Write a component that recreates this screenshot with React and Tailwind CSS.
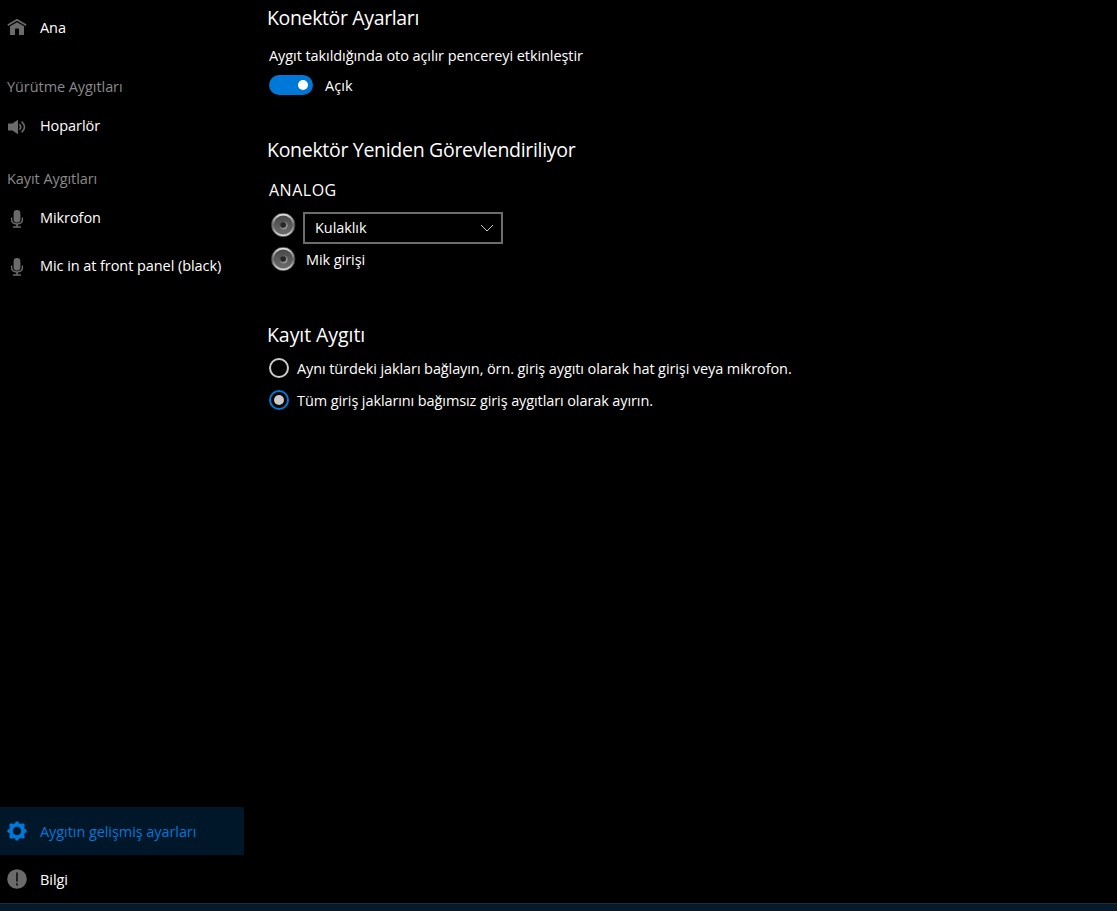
import { clsx } from 'clsx'

function HomeIcon() {
    return (
        <svg width="20" height="20" viewBox="0 1 20 20" fill="none">
            <path d="M0.8 8.2 L10 2.8 L19.2 8.2" stroke="#6b6b6b" strokeWidth="1.7" />
            <path d="M3 9.2 L10 5.2 L17 9.2 V18 H12 V12.3 Q12 11.6 11.3 11.6 H8.7 Q8 11.6 8 12.3 V18 H3 Z" fill="#6b6b6b" />
        </svg>
    )
}

function SpeakerIcon() {
    return (
        <svg width="20" height="20" viewBox="0 -1 20 20" fill="none">
            <path d="M1 6.6 H5.4 L11 2.8 V17.2 L5.4 13.4 H1 Z" fill="#6b6b6b" />
            <path d="M12.4 7.2 Q15 10 12.4 12.8" stroke="#6b6b6b" strokeWidth="1.6" />
            <path d="M14.6 4.6 Q20.4 10 14.6 15.4" stroke="#6b6b6b" strokeWidth="1.6" />
        </svg>
    )
}

function MicIcon() {
    return (
        <svg width="20" height="20" viewBox="0 -1 20 20" fill="none">
            <rect x="6.6" y="1" width="6.8" height="12.6" rx="3.4" fill="#6b6b6b" />
            <path d="M4.6 8.6 V10.6 Q4.6 15 10 15 Q15.4 15 15.4 10.6 V8.6" stroke="#6b6b6b" strokeWidth="1.4" />
            <path d="M10 15 V18 M6 18 H14" stroke="#6b6b6b" strokeWidth="1.6" />
        </svg>
    )
}

function GearIcon() {
    return (
        <svg width="20" height="20" viewBox="0 0 20 20">
            <path
                fill="#0078d7"
                fillRule="evenodd"
                d="M8 2.4 L8.7 0.4 H11.3 L12 2.4 L14.1 2.8 L16.2 2.2 L17.8 3.8 L17.2 5.9 L17.6 8 L19.6 8.7 V11.3 L17.6 12 L17.2 14.1 L17.8 16.2 L16.2 17.8 L14.1 17.2 L12 17.6 L11.3 19.6 H8.7 L8 17.6 L5.9 17.2 L3.8 17.8 L2.2 16.2 L2.8 14.1 L2.4 12 L0.4 11.3 V8.7 L2.4 8 L2.8 5.9 L2.2 3.8 L3.8 2.2 L5.9 2.8 Z M10 5.8 A4.2 4.2 0 1 0 10 14.2 A4.2 4.2 0 1 0 10 5.8 Z"
            />
        </svg>
    )
}

function InfoIcon() {
    return (
        <svg width="20" height="20" viewBox="0 0 20 20">
            <circle cx="10" cy="10" r="9.8" fill="#6b6b6b" />
            <path d="M9 3.6 H11 V12.8 H9 Z M9 14.2 H11 V16.4 H9 Z" fill="#222" />
        </svg>
    )
}

// Round audio jack seen from the front
function JackIcon() {
    return (
        <svg width="26" height="26" viewBox="0 0 26 26">
            <defs>
                <linearGradient id="rim" x1="0" y1="0" x2="0" y2="1">
                    <stop offset="0" stopColor="#f0f0f0" />
                    <stop offset="0.5" stopColor="#686868" />
                    <stop offset="1" stopColor="#e8e8e8" />
                </linearGradient>
                <linearGradient id="face" x1="0" y1="0" x2="0" y2="1">
                    <stop offset="0" stopColor="#484848" />
                    <stop offset="1" stopColor="#6c6c6c" />
                </linearGradient>
                <linearGradient id="hole" x1="0" y1="0" x2="1" y2="1">
                    <stop offset="0.2" stopColor="#505050" />
                    <stop offset="1" stopColor="#b4b4b4" />
                </linearGradient>
            </defs>
            <circle cx="13.2" cy="13" r="11.8" fill="url(#rim)" stroke="#3c3c3c" strokeWidth="0.8" />
            <circle cx="13.2" cy="13" r="9.4" fill="url(#face)" />
            <circle cx="13.4" cy="13.2" r="4.2" fill="url(#hole)" />
            <circle cx="13.2" cy="13" r="2.8" fill="#262626" />
        </svg>
    )
}

function NavItem({ icon, label, active, className, labelClassName }) {
    return (
        <a
            className={clsx(
                'flex h-12 items-center gap-[13px] pl-[7px] whitespace-nowrap',
                active ? 'bg-[#001629] text-[#0078d7]' : 'text-white',
                className
            )}
        >
            <span className="shrink-0">{icon}</span>
            <span className={labelClassName}>{label}</span>
        </a>
    )
}

function NavHeading({ children, className }) {
    return (
        <div className={clsx('flex h-[30px] items-center pl-[7px] text-[#8a8a8a]', className)}>
            {children}
        </div>
    )
}

function Title({ children, className }) {
    return <h2 className={clsx('-ml-0.5 text-[19.5px] leading-7', className)}>{children}</h2>
}

function Radio({ label, checked }) {
    return (
        <label className="flex h-8 items-center gap-2">
            <span
                className={clsx(
                    'flex size-5 shrink-0 items-center justify-center rounded-full border-2',
                    checked ? 'border-[#0078d7]' : 'border-[#cccccc]'
                )}
            >
                {checked && <span className="size-2.5 rounded-full bg-[#cccccc]" />}
            </span>
            <span className="pt-0.5 tracking-[-0.1px] whitespace-nowrap">{label}</span>
        </label>
    )
}

export default function App() {
    return (
        <div className="flex h-[911px] w-[1117px] flex-col overflow-hidden bg-black font-['Open_Sans','Noto_Sans',sans-serif] text-[14.5px] leading-5 tracking-[-0.07px] text-white">
            <div className="flex flex-1">
                <nav className="flex w-[244px] flex-col pt-1">
                    <NavItem icon={<HomeIcon />} label="Ana" />
                    <NavHeading className="mt-5">Yürütme Aygıtları</NavHeading>
                    <NavItem icon={<SpeakerIcon />} label="Hoparlör" />
                    <NavHeading className="mt-3.5">Kayıt Aygıtları</NavHeading>
                    <NavItem icon={<MicIcon />} label="Mikrofon" />
                    <NavItem icon={<MicIcon />} label="Mic in at front panel (black)" />
                    <NavItem
                        icon={<GearIcon />}
                        label="Aygıtın gelişmiş ayarları"
                        active
                        className="mt-auto"
                        labelClassName="pt-0.5"
                    />
                    <NavItem icon={<InfoIcon />} label="Bilgi" labelClassName="pt-0.5" />
                </nav>

                <main className="flex flex-1 flex-col pt-1 pl-[25px]">
                    <Title className="tracking-[-0.36px]">Konektör Ayarları</Title>
                    <p className="mt-3.5">Aygıt takıldığında oto açılır pencereyi etkinleştir</p>
                    <div className="mt-[9px] flex h-5 items-center gap-3">
                        <span className="flex h-5 w-11 items-center justify-end rounded-full bg-[#0078d7] pr-[5px]">
                            <span className="size-2.5 rounded-full bg-white" />
                        </span>
                        <span className="pt-0.5 tracking-[0.1px]">Açık</span>
                    </div>

                    <Title className="mt-[41px] tracking-[-0.3px]">Konektör Yeniden Görevlendiriliyor</Title>
                    <h3 className="mt-4 text-base leading-5 tracking-[0.5px]">ANALOG</h3>
                    <div className="mt-3 flex h-8 items-start gap-[7px] pl-[1px]">
                        <JackIcon />
                        <div className="flex h-8 w-[200px] items-center justify-between border-2 border-[#6c6c6c] pr-[7px] pl-2.5">
                            <span>Kulaklık</span>
                            <svg width="14" height="8" viewBox="0 0 14 8" fill="none">
                                <path d="M1 1 L7 7 L13 1" stroke="#cccccc" />
                            </svg>
                        </div>
                    </div>
                    <div className="mt-0.5 flex h-[26px] items-center gap-2.5 pl-[1px]">
                        <JackIcon />
                        <span className="pt-0.5">Mik girişi</span>
                    </div>

                    <Title className="mt-[49px]">Kayıt Aygıtı</Title>
                    <div className="mt-[3px]">
                        <Radio label="Aynı türdeki jakları bağlayın, örn. giriş aygıtı olarak hat girişi veya mikrofon." />
                        <Radio label="Tüm giriş jaklarını bağımsız giriş aygıtları olarak ayırın." checked />
                    </div>
                </main>
            </div>
            <footer className="h-2 border-t border-[#202b33] bg-[#051a2b]" />
        </div>
    )
}
